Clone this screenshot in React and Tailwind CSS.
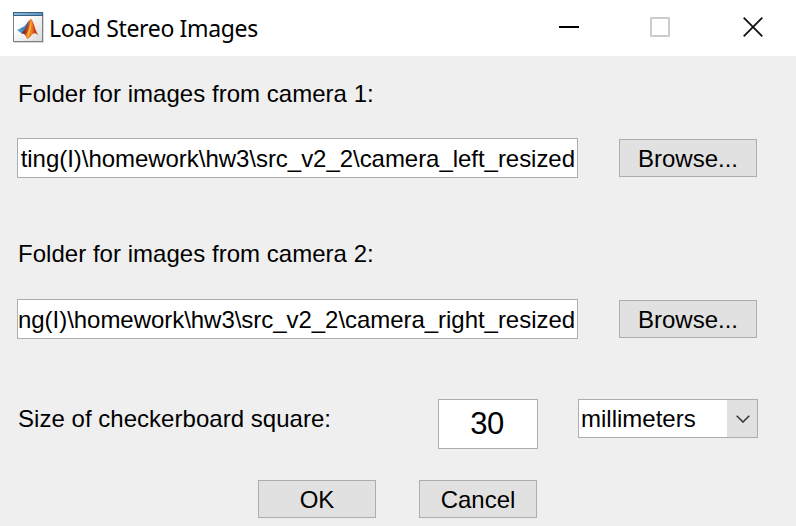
import React from "react";

function MatlabIcon() {
  return (
    <svg width="31" height="31" viewBox="0 0 31 31">
      <defs>
        <linearGradient id="page" x1="0" y1="0" x2="1" y2="1">
          <stop offset="0.3" stopColor="#ffffff" />
          <stop offset="1" stopColor="#d9dadc" />
        </linearGradient>
        <linearGradient id="bar" x1="0" y1="0" x2="1" y2="0">
          <stop offset="0" stopColor="#8dbbe0" />
          <stop offset="1" stopColor="#5a94c4" />
        </linearGradient>
        <linearGradient id="peak" x1="0" y1="0" x2="1" y2="0">
          <stop offset="0" stopColor="#5c1c20" />
          <stop offset="0.35" stopColor="#c9431a" />
          <stop offset="0.6" stopColor="#ee8a26" />
          <stop offset="0.72" stopColor="#d9481a" />
          <stop offset="1" stopColor="#a82a12" />
        </linearGradient>
        <linearGradient id="wing" x1="0" y1="0" x2="1" y2="0">
          <stop offset="0" stopColor="#5db0e4" />
          <stop offset="1" stopColor="#2b5c9c" />
        </linearGradient>
      </defs>
      <path d="M1 30.5H30.5V1" fill="none" stroke="#d8d8d8" />
      <rect x="0.5" y="0.5" width="29" height="29" fill="url(#page)" stroke="#7c8084" />
      <rect x="0" y="0" width="30" height="4" fill="#39607f" />
      <rect x="1" y="1" width="28" height="2" fill="url(#bar)" />
      <path d="M4 18L10 15C12 14.8 14 10.5 16 8.5L15 17L9.5 22Z" fill="url(#wing)" />
      <path d="M8.5 21.5L13 16C15 13 16 7 18 7C20 7 21.5 17 25.5 23.5C22.5 20.5 20.5 20.5 18 24L14.5 27C13 24 11.5 21 8.5 21.5Z" fill="url(#peak)" />
      <path d="M18 7C19.4 12 19.4 18 17.6 23.5L14.5 27C13.8 25 13 23.5 12.4 22.5C15 20 16.8 14 18 7Z" fill="#ec7d24" />
      <path d="M18 8C18.8 13 18 18 15.6 24.5L14.4 26.4C13.8 24 16.8 15 18 8Z" fill="#f7b93a" />
    </svg>
  );
}

function TitleBar() {
  return (
    <header className="flex h-14 items-start bg-white">
      <div className="ml-[13px] mt-3 h-[31px] w-[31px]">
        <MatlabIcon />
      </div>
      <h1 className="ml-[5px] mt-3 w-[240px] whitespace-nowrap font-['Noto_Sans',sans-serif] text-[23px] leading-8 tracking-[-0.35px]">
        Load Stereo Images
      </h1>
      <div className="ml-auto mr-[33px] mt-[17px] flex h-5 items-center">
        <div className="h-0.5 w-5 bg-black" />
        <div className="ml-[71px] h-5 w-5 border-2 border-[#cccccc]" />
        <svg className="ml-[73px]" width="20" height="20" viewBox="0 0 20 20">
          <path d="M0.7 0.7L19.3 19.3M19.3 0.7L0.7 19.3" stroke="#111" strokeWidth="1.8" />
        </svg>
      </div>
    </header>
  );
}

function Button({ className, children }) {
  return (
    <button className={`flex h-[38px] items-center justify-center border border-[#adadad] bg-[#e1e1e1] pt-0.5 leading-7 ${className}`}>
      {children}
    </button>
  );
}

function FolderRow({ path, className }) {
  return (
    <div className={`flex h-10 items-center ${className}`}>
      <div className="flex h-10 w-[561px] items-center justify-end overflow-hidden whitespace-nowrap border border-[#abadb3] bg-white pr-[2px] pt-0.5 tracking-[-0.04px]">
        {path}
      </div>
      <Button className="ml-[41px] w-[138px]">Browse...</Button>
    </div>
  );
}

export default function App() {
  return (
    <div className="h-[526px] w-[796px] overflow-hidden bg-[#efefef] font-['Liberation_Sans',Arial,sans-serif] text-[24px] text-black">
      <TitleBar />
      <main className="flex flex-col pl-[17px] pt-6 leading-7">
        <div className="pl-px tracking-[0.03px]"><span>Folder for images from camera 1:</span></div>
        <FolderRow className="mt-[30px]" path={"ting(I)\\homework\\hw3\\src_v2_2\\camera_left_resized"} />
        <div className="mt-[62px] pl-px tracking-[0.03px]"><span>Folder for images from camera 2:</span></div>
        <FolderRow className="mt-[31px]" path={"ng(I)\\homework\\hw3\\src_v2_2\\camera_right_resized"} />
        <div className="mt-[60px] flex h-[50px] items-start">
          <div className="mt-1.5 w-[421px] pl-px tracking-[0.03px]"><span>Size of checkerboard square:</span></div>
          <div className="flex h-[50px] w-[100px] items-center justify-center border border-[#abadb3] bg-white pr-0.5 text-[31px] tracking-[-0.5px]">
            30
          </div>
          <div className="ml-10 flex h-[39px] w-[180px] border border-[#abadb3] bg-white">
            <span className="mt-[5px] w-[148px] pl-0.5">millimeters</span>
            <div className="flex grow items-center justify-center bg-[#e1e1e1] pl-px">
              <svg width="14" height="8" viewBox="0 0 14 8">
                <path d="M0.7 0.7L7 7L13.3 0.7" fill="none" stroke="#333" strokeWidth="1.5" />
              </svg>
            </div>
          </div>
        </div>
        <div className="mt-[31px] flex gap-[43px] pl-[241px]">
          <Button className="w-[118px]">OK</Button>
          <Button className="w-[118px]">Cancel</Button>
        </div>
      </main>
    </div>
  );
}
